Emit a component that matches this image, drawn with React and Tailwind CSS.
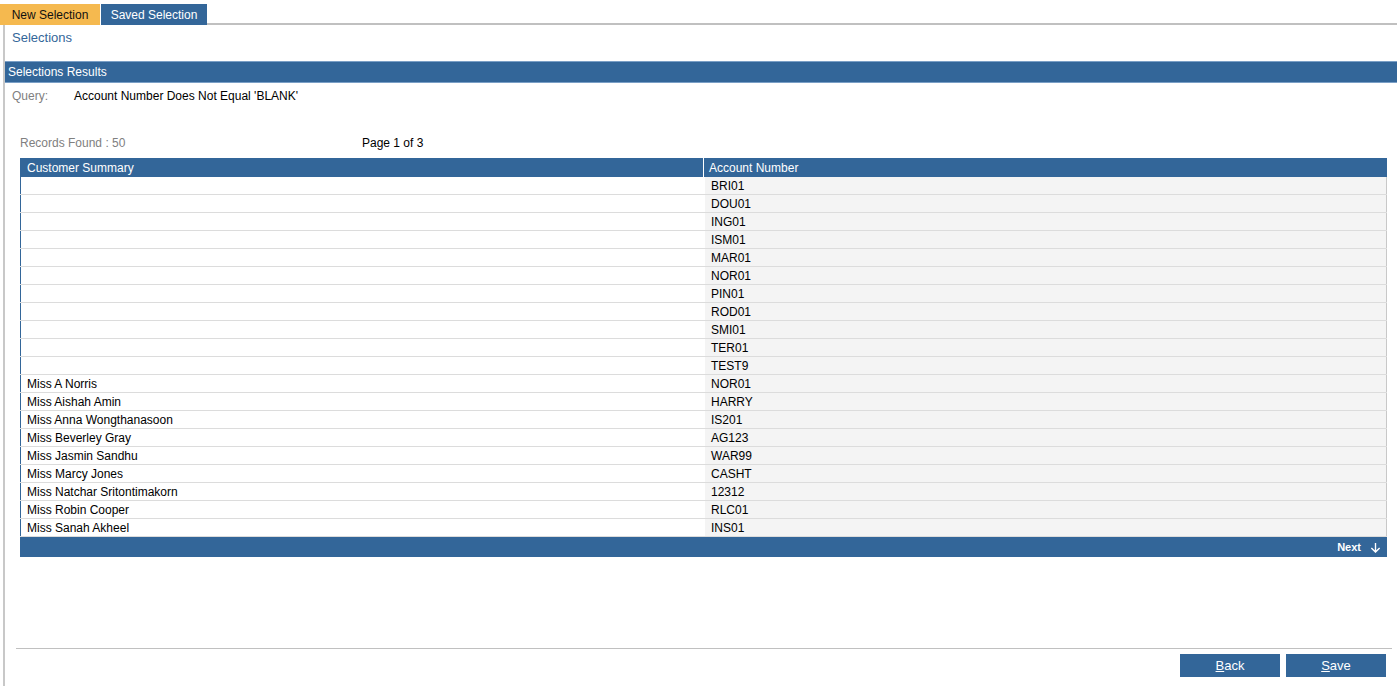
import React from "react";

const rows = [
  ["", "BRI01"],
  ["", "DOU01"],
  ["", "ING01"],
  ["", "ISM01"],
  ["", "MAR01"],
  ["", "NOR01"],
  ["", "PIN01"],
  ["", "ROD01"],
  ["", "SMI01"],
  ["", "TER01"],
  ["", "TEST9"],
  ["Miss A Norris", "NOR01"],
  ["Miss Aishah Amin", "HARRY"],
  ["Miss Anna Wongthanasoon", "IS201"],
  ["Miss Beverley Gray", "AG123"],
  ["Miss Jasmin Sandhu", "WAR99"],
  ["Miss Marcy Jones", "CASHT"],
  ["Miss Natchar Sritontimakorn", "12312"],
  ["Miss Robin Cooper", "RLC01"],
  ["Miss Sanah Akheel", "INS01"],
];

const FONT = { fontFamily: '"Liberation Sans", Arial, sans-serif' };

const App = () => {
  return (
    <div
      className="w-[1397px] h-[691px] overflow-hidden bg-white text-[12px] text-black"
      style={FONT}
    >
      {/* tabs */}
      <div className="flex items-end pt-[4px]">
        <div className="h-[21px] w-[100px] bg-[#f5b94f] flex items-center justify-center text-[12px] text-[#111]">
          New Selection
        </div>
        <div className="ml-[1px] h-[21px] w-[106px] bg-[#336699] flex items-center justify-center text-[12px] text-white">
          Saved Selection
        </div>
        <div className="flex-1 h-[2px] bg-[#c0c0c0]"></div>
      </div>

      <div className="ml-[3px] border-l-2 border-[#c8c8c8] h-[661px] flex flex-col">
        <div className="h-[36px] pt-[6px] pl-[7px] text-[13px] text-[#336699] leading-[14px]">
          Selections
        </div>

        <div className="h-[22px] bg-[#336699] border-y border-[#7a9fc6] flex items-center pl-[3px] text-white">
          Selections Results
        </div>

        <div className="flex items-center h-[26px] pl-[7px]">
          <span className="w-[62px] text-[#808080]">Query:</span>
          <span>Account Number Does Not Equal 'BLANK'</span>
        </div>

        <div className="h-[24px]"></div>

        <div className="flex items-center h-[20px] pl-[15px]">
          <span className="w-[342px] text-[#808080]">Records Found : 50</span>
          <span>Page 1 of 3</span>
        </div>

        <div className="ml-[15px] mr-[10px] mt-[5px]">
          <div className="flex h-[19px] bg-[#336699] text-white">
            <div className="w-[684px] pl-[7px] flex items-center border-r border-white">
              Customer Summary
            </div>
            <div className="flex-1 pl-[5px] flex items-center">Account Number</div>
          </div>
          {rows.map(([name, acct], i) => (
            <div key={i} className="flex h-[18px] border-b border-[#dcdcdc]">
              <div className="w-[684px] pl-[6px] flex items-center border-l border-[#336699] bg-white">
                {name}
              </div>
              <div className="flex-1 pl-[6px] flex items-center bg-[#f4f4f4] border-l border-white border-r border-r-[#c8c8c8]">
                {acct}
              </div>
            </div>
          ))}
          <div className="h-[20px] bg-[#336699] flex items-center justify-end pr-[6px] text-white text-[11px] font-bold">
            <span>Next</span>
            <svg
              className="ml-[9px]"
              width="11"
              height="11"
              viewBox="0 0 12 12"
              fill="none"
              stroke="white"
              strokeWidth="1.5"
            >
              <path d="M6 1v10M1.5 6.5L6 11l4.5-4.5" />
            </svg>
          </div>
        </div>

        <div className="flex-1"></div>

        <div className="ml-[11px] mr-[5px] h-px bg-[#c0c0c0]"></div>
        <div className="flex justify-end gap-[6px] pr-[11px] pt-[5px] pb-[9px]">
          <button className="w-[100px] h-[23px] bg-[#336699] text-white text-[13px]">
            <span className="underline">B</span>ack
          </button>
          <button className="w-[100px] h-[23px] bg-[#336699] text-white text-[13px]">
            <span className="underline">S</span>ave
          </button>
        </div>
      </div>
    </div>
  );
};

export default App;
